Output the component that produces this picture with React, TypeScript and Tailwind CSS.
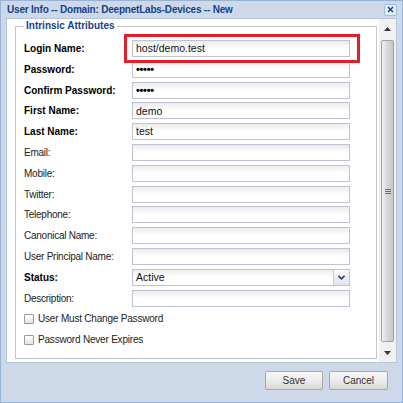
import React from "react";

type Row = {
  label: string;
  bold?: boolean;
  value?: string;
  password?: boolean;
  select?: boolean;
};

const rows: Row[] = [
  { label: "Login Name:", bold: true, value: "host/demo.test" },
  { label: "Password:", bold: true, value: "•••••", password: true },
  { label: "Confirm Password:", bold: true, value: "•••••", password: true },
  { label: "First Name:", bold: true, value: "demo" },
  { label: "Last Name:", bold: true, value: "test" },
  { label: "Email:" },
  { label: "Mobile:" },
  { label: "Twitter:" },
  { label: "Telephone:" },
  { label: "Canonical Name:" },
  { label: "User Principal Name:" },
  { label: "Status:", bold: true, value: "Active", select: true },
  { label: "Description:" },
];

function TextField({ row }: { row: Row }) {
  return (
    <div className="relative flex h-[17px] w-[218px] items-center border border-[#bfc2d2] bg-gradient-to-b from-[#ececec] via-white to-white px-[3px]">
      <span
        className={
          row.password
            ? "text-[11px] leading-none font-bold tracking-[-0.3px] text-black"
            : "text-[10.5px] leading-none text-[#111]"
        }
      >
        {row.value}
      </span>
      {row.select && (
        <div className="absolute top-0 right-0 flex h-full w-[16px] items-center justify-center border-l border-[#c4c7d4] bg-gradient-to-b from-[#fafafa] to-[#e2e4ea]">
          <svg width="7" height="5" viewBox="0 0 7 5">
            <path d="M0.5 0.8 L3.5 3.8 L6.5 0.8" fill="none" stroke="#1f3f7e" strokeWidth="1.6" />
          </svg>
        </div>
      )}
    </div>
  );
}

function Checkbox({ label }: { label: string }) {
  return (
    <div className="flex h-[17px] items-center gap-[4px]">
      <span className="h-[10px] w-[10px] rounded-[1px] border border-[#9a9a9a] bg-gradient-to-b from-white to-[#e4e4e4]" />
      <span className="text-[10px] tracking-[-0.2px] text-[#222]">{label}</span>
    </div>
  );
}

function Scrollbar() {
  return (
    <div className="flex w-[17px] flex-col bg-[#f1f1f1]">
      <div className="flex h-[20px] items-center justify-center">
        <svg width="7" height="4" viewBox="0 0 7 4">
          <polygon points="0,4 7,4 3.5,0" fill="#333" />
        </svg>
      </div>
      <div className="mx-[2px] my-[1px] flex flex-1 items-center justify-center rounded-[2px] border border-[#a0a0a0] bg-gradient-to-r from-[#f2f2f2] via-[#d6d6d6] to-[#c8c8c8]">
        <div className="flex flex-col gap-[1px]">
          <span className="h-[1px] w-[6px] bg-[#6e6e6e]" />
          <span className="h-[1px] w-[6px] bg-[#6e6e6e]" />
          <span className="h-[1px] w-[6px] bg-[#6e6e6e]" />
        </div>
      </div>
      <div className="flex h-[19px] items-center justify-center">
        <svg width="7" height="4" viewBox="0 0 7 4">
          <polygon points="0,0 7,0 3.5,4" fill="#333" />
        </svg>
      </div>
    </div>
  );
}

export default function App() {
  return (
    <div
      className="relative flex h-[403px] w-[403px] flex-col border border-[#99b3d6] bg-[#cdd9e8]"
      style={{ fontFamily: '"Liberation Sans", Arial, sans-serif' }}
    >
      <div className="flex h-[17px] items-center justify-between pr-[5px] pl-[6px]">
        <span className="text-[10px] font-bold tracking-[-0.2px] text-[#15428b]">
          User Info -- Domain: DeepnetLabs-Devices -- New
        </span>
        <button className="flex h-[12px] w-[13px] items-center justify-center rounded-[2px] border border-[#99bbe8] bg-[#e6eef8]">
          <svg width="7" height="7" viewBox="0 0 7 7">
            <path d="M1 1 L6 6 M6 1 L1 6" stroke="#15428b" strokeWidth="1.5" />
          </svg>
        </button>
      </div>

      <div className="mx-[5px] flex h-[345px] border border-[#b3c6df] bg-white">
        <div className="flex-1 overflow-hidden">
          <fieldset className="mt-[1px] mr-[2px] ml-[8px] border border-[#c6c6c6] px-[8px] pt-[8px] pb-[10px]">
            <legend className="px-[2px] text-[10px] leading-[12px] font-bold text-[#15428b]">
              Intrinsic Attributes
            </legend>
            <div className="flex flex-col gap-[3.8px]">
              {rows.map((row) => (
                <div key={row.label} className="flex h-[17px] items-center">
                  <span
                    className={
                      row.bold
                        ? "w-[108px] text-[10px] font-bold text-black"
                        : "w-[108px] text-[10px] tracking-[-0.25px] text-[#222]"
                    }
                  >
                    {row.label}
                  </span>
                  <TextField row={row} />
                </div>
              ))}
              <Checkbox label="User Must Change Password" />
              <Checkbox label="Password Never Expires" />
            </div>
          </fieldset>
        </div>
        <Scrollbar />
      </div>

      <div className="flex justify-end gap-[6px] pt-[8px] pr-[14px]">
        <button className="h-[19px] w-[58px] rounded-[2px] border border-[#a9a9a9] bg-gradient-to-b from-[#f7f7f7] via-[#ececec] to-[#d8d8d8] text-[10px] text-[#333]">
          Save
        </button>
        <button className="h-[19px] w-[59px] rounded-[2px] border border-[#a9a9a9] bg-gradient-to-b from-[#f7f7f7] via-[#ececec] to-[#d8d8d8] text-[10px] text-[#333]">
          Cancel
        </button>
      </div>

      <div className="absolute top-[33px] left-[123px] h-[29px] w-[236px] border-[3px] border-[#e3202a]" />
    </div>
  );
}
